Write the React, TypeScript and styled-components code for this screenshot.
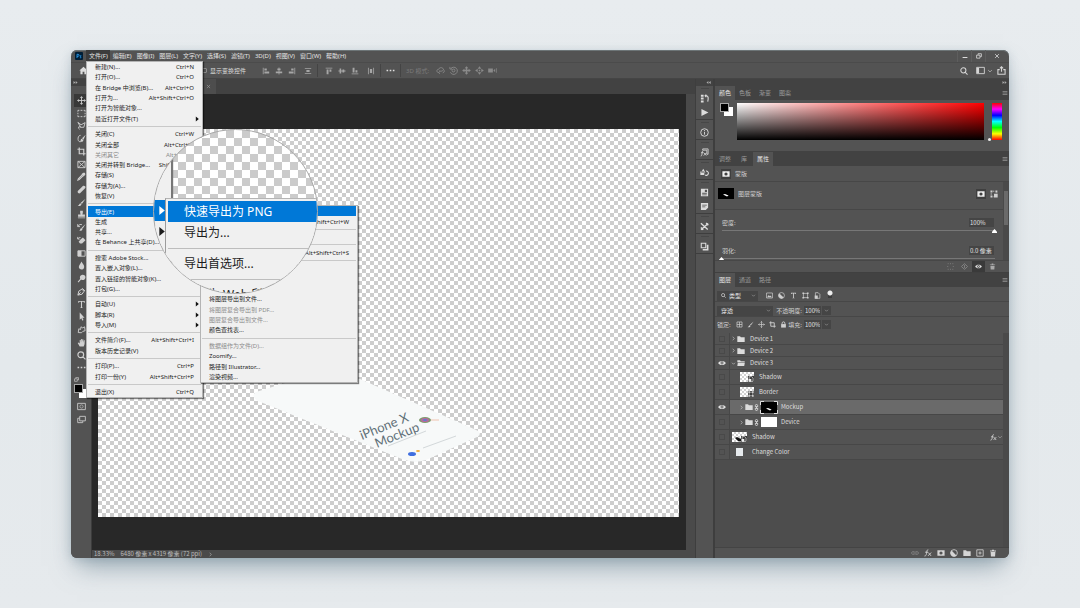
import React from "react";
import styled, { createGlobalStyle, css } from "styled-components";

const c = {
  bar: "#535353",
  dark: "#424242",
  field: "#454545",
  line: "#474747",
  canvas: "#282828",
  text: "#cfcfcf",
  dim: "#9a9a9a",
  menu: "#f0f0f0",
  blue: "#0078d7",
};

const Global = createGlobalStyle`
  * { box-sizing: border-box; }
  body { margin: 0; background: linear-gradient(180deg, #e8ecef 0%, #e4e9ec 60%, #e6eaed 100%); }
  button, input, select, label {
    font: inherit; color: inherit; margin: 0; padding: 0; border: 0; background: none; outline: none;
  }
  button, select { appearance: none; }
  svg { display: block; flex: none; }
`;

const Page = styled.main`
  min-height: 100vh;
  display: flex;
  padding: 50px 71px;
  font: 6px/8px "Noto Sans", "Noto Sans CJK SC", sans-serif;
  color: ${c.text};
`;

const Window = styled.div`
  position: relative;
  flex: 1;
  min-width: 0;
  display: flex;
  flex-direction: column;
  border-radius: 6px;
  background: ${c.bar};
  box-shadow: 0 14px 24px -6px rgba(96, 122, 136, 0.6), 0 2px 10px rgba(120, 145, 158, 0.3);
`;

/* ---------- icons ---------- */

type Shape = { d: string; fill?: boolean; w?: number };
const shapes: Record<string, Shape[]> = {
  move: [{ d: "M5 .8V9.2M.8 5H9.2M3.7 2 5 .7 6.3 2M3.7 8 5 9.3 6.3 8M2 3.7.7 5 2 6.3M8 3.7 9.3 5 8 6.3" }],
  marquee: [{ d: "M1 3V1.5H2.6M4 1.5H6M7.4 1.5H9V3M9 4.2V5.8M9 7V8.5H7.4M6 8.5H4M2.6 8.5H1V7M1 5.8V4.2" }],
  lasso: [{ d: "M1 1.5 4.5 4.2 9 1.8 7.6 7H4.2L1 1.5M4.2 7 2.2 6.2 1.6 8 3 9.2" }],
  quick: [{ d: "M4 1.5C1.5 1.5 1 4 1.2 6.2S3 8.8 4 8.6" }, { d: "M9.6.8 5.6 4.8 7.2 6.4ZM5.2 5.2C3.6 5.6 4.6 7.6 3.2 8.4 5.4 9.2 7.4 8.4 7 6.7Z", fill: true }],
  crop: [{ d: "M2.5.5V7.5H9.5M.5 2.5H7.5V9.5", w: 1.3 }],
  frame: [{ d: "M1 1.5H9V8.5H1ZM1 1.5 9 8.5M9 1.5 1 8.5" }],
  dropper: [{ d: "M6 3 1.5 7.5 1 9 2.5 8.5 7 4", w: 1.2 }, { d: "M5 2.4 7.6 5 8.2 4.2 9.4 2.6 8.6.8 7 .8 5.8 1.8Z", fill: true }],
  heal: [{ d: "M.9 6.6 6.2 1.3C7.2.3 8.4.8 9 1.5S9.6 3.2 8.7 4L3.4 9.2C2 10 0 8 .9 6.6Z", fill: true }],
  brush: [{ d: "M9.5.8 4.2 5.4 5.4 6.6ZM3.8 5.9C2.4 6.2 2.6 8 .8 8.8 3 9.4 5 8.6 4.9 7Z", fill: true }],
  stamp: [{ d: "M3.5.8H6.5V3L6 5H8.8V7.4H1.2V5H4L3.5 3ZM1 8.2H9V9.2H1Z", fill: true }],
  history: [{ d: "M9.5 1 5.2 5.2 6.2 6.3ZM4.8 5.6C3.6 6 4 7.4 2.6 8.6 5 9 6 8 6 6.6Z", fill: true }, { d: "M.8 1.2V4H3.4M1 3.8C2 1.6 4.4 1.2 5.6 2" }],
  eraser: [{ d: "M4.2 3.6 6.6 1.6 9.4 4.8 5.6 8.4H3.4L1.8 6.4Z", fill: true }, { d: "M.8 1V3.4H3M1 3.2C2 1.4 3.2 1.4 4 1.8" }],
  gradient: [{ d: "M1 2H9V8H1Z" }, { d: "M1 2H5V8H1Z", fill: true }],
  drop: [{ d: "M5 .6C6 3 8.2 4.6 8 6.6S6.4 9.4 5 9.4 2 8.4 2 6.6 4 3 5 .6Z", fill: true }],
  dodge: [{ d: "M6 .8A3 3 0 1 1 4.6 6.2L1.6 9.4.8 8.6 3.6 5.2A3 3 0 0 1 6 .8Z", fill: true }],
  pen: [{ d: "M1 9 2 4.6 5.4 2.4 7.8 4.8 5.6 8 1 9 4 6M5.8 1.4 8.8 4.4", w: 1.1 }],
  type: [{ d: "M1.4 1H8.6V3H7.8L7.4 2H5.6V8.2L6.6 8.6V9H3.4V8.6L4.4 8.2V2H2.6L2.2 3H1.4Z", fill: true }],
  arrow: [{ d: "M3 .6V8.6L4.8 7 6 9.6 7.2 9 6 6.4H8.4Z", fill: true }],
  blob: [{ d: "M1.4 8.4 2 4.2 4 5 4.4 2 6.4 3.2 8.4 2 9 6.4 6.6 7 5 8.6Z" }],
  hand: [{ d: "M3 9.4 .8 5.6 1.6 5 3 6V2.2H4V5L4.4 1H5.4V5L6 1.4H7L7 5.2 7.6 2.6H8.6L8.4 7 7.4 9.4Z", fill: true }],
  zoom: [{ d: "M4.2 1A3.2 3.2 0 1 1 4.2 7.4 3.2 3.2 0 0 1 4.2 1M6.6 6.6 9.4 9.4", w: 1.3 }],
  dots: [{ d: "M.6 4.2H2.4V5.8H.6ZM4.1 4.2H5.9V5.8H4.1ZM7.6 4.2H9.4V5.8H7.6Z", fill: true }],
  mask: [{ d: "M.5 1.5H9.5V8.5H.5ZM5 3A2 2 0 1 0 5 7 2 2 0 1 0 5 3Z", fill: true }],
  quickMask: [{ d: "M.7 1.5H9.3V8.5H.7Z" }, { d: "M5 3.2A1.8 1.8 0 1 1 5 6.8 1.8 1.8 0 0 1 5 3.2", w: 0.7 }],
  screen: [{ d: "M3 1.5H9.3V6.5H3ZM2.8 3.6H.8V8.5H6.4V6.8" }],
  home: [{ d: "M5 .8 9.6 5H8.4V9.2H6V6.4H4V9.2H1.6V5H.4Z", fill: true }],
  alignL: [{ d: "M1 .8H2V9.2H1ZM3 2H6V4.4H3ZM3 5.6H9V8H3Z", fill: true }],
  alignC: [{ d: "M4.5.6H5.5V2H7V4H5.5V5.6H9V7.8H5.5V9.4H4.5V7.8H1V5.6H4.5V4H3V2H4.5Z", fill: true }],
  alignR: [{ d: "M8 .8H9V9.2H8ZM4 2H7V4.4H4ZM1 5.6H7V8H1Z", fill: true }],
  distV: [{ d: "M1 1.2H9V2.2H1ZM3 3.6H7V6.4H3ZM1 7.8H9V8.8H1Z", fill: true }],
  alignT: [{ d: "M.8 1H9.2V2H.8ZM2 3H4.4V9H2ZM5.6 3H8V6H5.6Z", fill: true }],
  alignM: [{ d: "M.6 4.5H2V2H4V4.5H5.6V3H7.8V4.5H9.4V5.5H7.8V7H5.6V5.5H4V8H2V5.5H.6Z", fill: true }],
  alignB: [{ d: "M.8 8H9.2V9H.8ZM2 1H4.4V7H2ZM5.6 4H8V7H5.6Z", fill: true }],
  distH: [{ d: "M1.2 1H2.2V9H1.2ZM3.6 2.6H6.4V7.4H3.6ZM7.8 1H8.8V9H7.8Z", fill: true }],
  orbit: [{ d: "M7.5 7.6C9.6 7 9.8 4.8 8.4 4.2 8 1.4 4 1 3 3.6.4 3.6.2 7.2 3 7.4M4 6 3 7.4 4.4 8.6M3.6 5.4C5 6.2 7 5.8 8.2 4.4" }],
  roll: [{ d: "M2 3A4 4 0 1 1 1.6 7M1 1V3.4H3.4M5 3.4A1.6 1.6 0 1 1 5 6.6 1.6 1.6 0 0 1 5 3.4" }],
  pan: [{ d: "M5 .2 7 2.6H5.8V4.2H7.4V3L9.8 5 7.4 7V5.8H5.8V7.4H7L5 9.8 3 7.4H4.2V5.8H2.6V7L.2 5 2.6 3V4.2H4.2V2.6H3Z", fill: true }],
  slide: [{ d: "M5 .2 7 3H3ZM5 9.8 7 7H3ZM.2 5 3 3V7ZM9.8 5 7 3V7ZM4.2 4.2H5.8V5.8H4.2Z", fill: true }],
  camera: [{ d: "M.2 2.8H5.4V7.2H.2ZM6 5 8 3V7ZM9 2.6H9.7V7.4H9Z", fill: true }],
  layout: [{ d: "M.7 1.5H9.3V8.5H.7Z" }, { d: "M1 2H3.4V8H1Z", fill: true }],
  share: [{ d: "M3 4H1V9.2H9V4H7M5 6.4V1M3.2 2.6 5 .8 6.8 2.6", w: 1.2 }],
  down: [{ d: "M2 3.5 5 6.5 8 3.5", w: 1.1 }],
  right: [{ d: "M3.5 1.5 6.5 5 3.5 8.5", w: 1.1 }],
  min: [{ d: "M1 6.5H9V8.3H1Z", fill: true }],
  restore: [{ d: "M3.4 3V1.2H9V6H7M1 3.6H6.6V8.6H1Z", w: 1.3 }],
  close: [{ d: "M1.8 1.8 8.2 8.2M8.2 1.8 1.8 8.2", w: 1.3 }],
  collapse: [{ d: "M4.8 2V8L1 5ZM9.4 2V8L5.6 5Z", fill: true }],
  expand: [{ d: "M1 2V8L4.8 5ZM5.4 2V8L9.2 5Z", fill: true }],
  lines: [{ d: "M1 2.5H9M1 5H9M1 7.5H9" }],
  historyP: [{ d: "M1 .8H4V3H1ZM1 4H4V6.2H1ZM1 7.2H4V9.4H1Z", fill: true }, { d: "M5.6 2H7.4C9.4 2.2 9.4 5 8.6 8.6M7 .6 5.6 2 7 3.4", w: 1.2 }],
  play: [{ d: "M1.6 1 9.4 5 1.6 9Z", fill: true }],
  info: [{ d: "M5 .8A4.2 4.2 0 1 1 5 9.2 4.2 4.2 0 0 1 5 .8M5 4.4V7.4M5 2.4V3.5" }],
  fxP: [{ d: "M3 1H9V7H7.6V2.4H3ZM3.6 3C2.4 3 2.4 5 2.2 6.8S1.4 9 .8 9M1.2 5.2H4M4.4 5.4 7 8.4M7 5.4 4.2 8.4", w: 0.9 }],
  shapesP: [{ d: "M3.6 .8 6 5H1.2ZM.4 4H4.8V7.8H.4Z", fill: true }, { d: "M6.6 3.4A2.4 2.4 0 1 1 5.6 7.8", w: 1.2 }],
  doc1: [{ d: "M1 .8H9V9.2H1ZM2.4 5.4V6.4H7.6V5.4ZM2.4 7.2V8H7.6V7.2ZM5.4 2V4.4H7.8V2Z", fill: true }],
  doc2: [{ d: "M1 1H9V6.4L6.4 9H1ZM2.4 3V3.8H7.6V3ZM2.4 5V5.8H6V5Z", fill: true }],
  tools: [{ d: "M1 1.4 8.6 8.4M9 1.6 1.2 8.6M6.8 1.2 9.2 3.6M1 6 3.6 8.6", w: 1.5 }],
  stack: [{ d: "M.8.8H7V7H.8ZM2 2V5.8H5.8V2ZM7.6 3H9.4V9.4H3V7.8H7.6Z", fill: true }],
  maskLink: [{ d: "M3.4 1.5H5.4M8.5 4V3.4M1.5 4V6M3.4 8.5H4.4" }, { d: "M.6.6H3V3H.6ZM6.8.6H9.2V3H6.8ZM.6 7H3V9.4H.6ZM5 4.8H9.6V9.4H5Z", fill: true }],
  dotsq: [{ d: "M1 1H2.4M4.3 1H5.7M7.6 1H9M1 9H2.4M4.3 9H5.7M7.6 9H9M1 4.3V5.7M9 4.3V5.7" }],
  diamond: [{ d: "M5 1 9.4 5 5 9 .6 5ZM5 3V7", w: 1.2 }],
  eye: [{ d: "M.2 5C2 1.6 8 1.6 9.8 5 8 8.4 2 8.4 .2 5ZM5 3.2A1.8 1.8 0 1 0 5 6.8 1.8 1.8 0 1 0 5 3.2ZM5 4.2A.8.8 0 1 1 5 5.8.8.8 0 0 1 5 4.2Z", fill: true }],
  trash: [{ d: "M1.2 2H3.8V.8H6.2V2H8.8V3H1.2ZM2 3.8H8L7.6 9.4H2.4Z", fill: true }],
  image: [{ d: "M.8 1.4H9.2V8.6H.8Z" }, { d: "M1.6 7.4 4 4.4 5.4 6 6.4 5 8.4 7.4Z", fill: true }],
  adjust: [{ d: "M5 .8A4.2 4.2 0 1 1 5 9.2 4.2 4.2 0 0 1 5 .8" }, { d: "M2 2A4.2 4.2 0 0 0 8 8Z", fill: true }],
  shapeF: [{ d: "M2 2H8V8H2Z" }, { d: "M.6.6H3V3H.6ZM7 .6H9.4V3H7ZM.6 7H3V9.4H.6ZM7 7H9.4V9.4H7Z", fill: true }],
  smart: [{ d: "M2 9V1H6L8.4 3.4V9Z" }, { d: "M1 5H5.4V9.6H1Z", fill: true }],
  grid: [{ d: "M1.4 1.4H8.6V8.6H1.4ZM1.4 5H8.6M5 1.4V8.6" }],
  lock: [{ d: "M1.6 4.4H8.4V9.4H1.6Z", fill: true }, { d: "M3 4.6V3C3 .6 7 .6 7 3V4.6", w: 1.3 }],
  folder: [{ d: "M.4 1.6H3.8L4.8 2.8H9.6V8.8H.4Z", fill: true }],
  folderOpen: [{ d: "M.4 1.6H3.8L4.8 2.8H9.6V4H.4ZM1 4.8H9.8L9 8.8H.4Z", fill: true }],
  link: [{ d: "M3.4 4.4V2C3.4.2 6.6.2 6.6 2V4.4M3.4 5.6V8C3.4 9.8 6.6 9.8 6.6 8V5.6M5 3V7", w: 1.3 }],
  linkH: [{ d: "M4.4 3.4H2C.4 3.4.4 6.6 2 6.6H4.4M5.6 3.4H8C9.6 3.4 9.6 6.6 8 6.6H5.6M3 5H7" }],
  fx: [{ d: "M5.4 1C3.6.6 3.6 3 3.2 5.4S2 9 .6 8.8M1.4 4H5M5.4 4.4 8.8 8.6M9 4.4 5 8.6", w: 1.1 }],
  plus: [{ d: "M1 1H9V9H1ZM5 3V7M3 5H7" }],
  tri: [{ d: "M3 1 8 5 3 9Z", fill: true }],
};

function Icon({ name, size = 8, color }: { name: string; size?: number; color?: string }) {
  return (
    <svg width={size} height={size} viewBox="0 0 10 10" color={color} aria-hidden="true">
      {shapes[name].map((s, i) => (
        <path
          key={i}
          d={s.d}
          fill={s.fill ? "currentColor" : "none"}
          fillRule="evenodd"
          stroke={s.fill ? "none" : "currentColor"}
          strokeWidth={s.w ?? 1}
        />
      ))}
    </svg>
  );
}

/* ---------- top bars ---------- */

const MenuBar = styled.nav`
  height: 12px;
  display: flex;
  align-items: stretch;
  border-radius: 6px 6px 0 0;
  box-shadow: inset 0 1px 0 #6d7577;
  overflow: hidden;
`;
const Logo = styled.div`
  width: 15px;
  display: flex;
  align-items: center;
  justify-content: center;
`;
const MenuButton = styled.button<{ $open?: boolean }>`
  padding: 0 2px 0 3px;
  white-space: nowrap;
  color: #e4e4e4;
  ${(p) => p.$open && css`background: #3c3c3c;`}
`;
const WindowButtons = styled.div`
  margin-left: auto;
  padding-right: 2px;
  display: flex;
`;
const WindowButton = styled.button<{ $wide?: boolean }>`
  width: ${(p) => (p.$wide ? 22 : 14)}px;
  display: flex;
  align-items: center;
  justify-content: center;
  border-left: 1px solid #5e5e5e;
  color: #ddd;
`;

const OptionsBar = styled.div`
  height: 17px;
  display: flex;
  align-items: center;
  border-top: 1px solid #4b4b4b;
  border-bottom: 1px solid #454545;
  padding-left: 8px;
  color: #a6a6a6;
`;
const OptionCheck = styled.label`
  display: flex;
  align-items: center;
  gap: 3px;
  margin-left: 114px;
  color: #dedede;
  white-space: nowrap;
`;
const Check = styled.input`
  appearance: none;
  width: 5px;
  height: 5px;
  border: 1px solid #8b8b8b;
  border-radius: 1px;
`;
const ToolGroup = styled.div<{ $left: number; $gap: number }>`
  display: flex;
  align-items: center;
  margin-left: ${(p) => p.$left}px;
  gap: ${(p) => p.$gap}px;
`;
const Divider = styled.span`
  width: 1px;
  height: 13px;
  margin: 0 5px;
  background: #444;
`;
const Mode = styled.span`
  color: #7c7c7c;
  white-space: nowrap;
`;
const IconButton = styled.button<{ $on?: boolean; $dim?: boolean }>`
  display: flex;
  align-items: center;
  justify-content: center;
  ${(p) => p.$on && css`background: #3a3a3a;`}
  ${(p) => p.$dim && css`color: #8a8a8a;`}
`;
const RightTools = styled.div`
  display: flex;
  align-items: center;
  gap: 4px;
  margin-left: auto;
  padding-right: 3px;
  color: #d5d5d5;
`;

/* ---------- work area ---------- */

const Work = styled.div`
  flex: 1;
  display: flex;
  min-height: 0;
`;
const Toolbar = styled.aside`
  width: 20px;
  display: flex;
  flex-direction: column;
  align-items: center;
  border-radius: 0 0 0 6px;
  background: ${c.bar};
  overflow: hidden;
`;
const Strip = styled.div<{ $end?: boolean }>`
  height: 7px;
  width: 100%;
  flex: none;
  display: flex;
  align-items: center;
  justify-content: ${(p) => (p.$end ? "flex-end" : "flex-start")};
  padding: 0 2px;
  background: ${c.dark};
  color: #aaa;
`;
const ToolList = styled.div`
  height: 280px;
  width: 20px;
  margin-top: 8px;
  display: flex;
  flex-direction: column;
`;
const Tool = styled.button<{ $on?: boolean }>`
  flex: 1;
  margin: 0 3px;
  display: flex;
  align-items: center;
  justify-content: center;
  color: #d0d0d0;
  ${(p) => p.$on && css`background: #383838;`}
`;
const Colors = styled.div<{ $size: number }>`
  display: grid;
  grid-template-columns: 1fr 1fr 1fr;
  grid-template-rows: 1fr 1fr 1fr;
  width: ${(p) => p.$size}px;
  height: ${(p) => p.$size}px;
  flex: none;
`;
const Back = styled.span`
  grid-area: 2 / 2 / 4 / 4;
  background: #fff;
`;
const Fore = styled.span`
  grid-area: 1 / 1 / 3 / 3;
  z-index: 1;
  background: #000;
  border: 1px solid #a8a8a8;
`;
const ToolFoot = styled.div`
  display: flex;
  flex-direction: column;
  align-items: center;
  gap: 4px;
  margin-top: 3px;
  color: #c8c8c8;
`;
const MiniSwatch = styled.span`
  width: 15px;
  height: 5px;
  margin-bottom: -2px;
  display: flex;
  color: #ccc;
`;

const Doc = styled.section`
  flex: 1;
  min-width: 0;
  display: flex;
  flex-direction: column;
  border-left: 1px solid #3c3c3c;
`;
const Tabs = styled.div`
  height: 15px;
  display: flex;
  background: ${c.dark};
`;
const DocTab = styled.div`
  width: 124px;
  display: flex;
  align-items: center;
  justify-content: flex-end;
  padding-right: 5px;
  background: #4d4d4d;
  color: #999;
`;
const CanvasRow = styled.div`
  flex: 1;
  display: flex;
  background: #4a4a4a;
`;
const CanvasArea = styled.div`
  flex: 1;
  display: flex;
  padding: 35px 7px 33px 6px;
  margin-right: 9px;
  background: ${c.canvas};
`;
const Stage = styled.div`
  flex: 1;
  min-width: 0;
  overflow: hidden;
  background: repeating-conic-gradient(#cdcdcd 0 25%, #fff 0 50%) 0 0 / 8px 8px;
`;
const Status = styled.div`
  height: 8px;
  display: flex;
  align-items: center;
  gap: 6px;
  padding-left: 2px;
  background: #4a4a4a;
  color: #bdbdbd;
  font-family: "Noto Sans CJK SC", sans-serif;
  white-space: nowrap;
`;

/* ---------- dock and panels ---------- */

const Dock = styled.aside`
  width: 20px;
  background: ${c.bar};
  border: 0 solid #3e3e3e;
  border-left-width: 1px;
  border-right-width: 2px;
`;
const DockGroup = styled.div`
  padding-top: 5px;
  border-bottom: 1px solid #3e3e3e;
  background: linear-gradient(#474747, #474747) center 2px / 8px 1px no-repeat;
`;
const DockButton = styled.button`
  width: 100%;
  height: 14px;
  display: flex;
  align-items: center;
  justify-content: center;
  color: #dcdcdc;
`;
const Panels = styled.aside`
  width: 294px;
  display: flex;
  flex-direction: column;
  background: ${c.bar};
  border-radius: 0 0 6px 0;
  font-family: "Noto Sans CJK SC", sans-serif;
  overflow: hidden;
`;
const PanelTabs = styled.div`
  height: 14px;
  flex: none;
  display: flex;
  align-items: stretch;
  background: ${c.dark};
  padding-right: 1px;
`;
const PanelTab = styled.button<{ $on?: boolean }>`
  min-width: 18px;
  padding: 0 4px;
  color: ${(p) => (p.$on ? "#e6e6e6" : c.dim)};
  background: ${(p) => (p.$on ? c.bar : "transparent")};
`;
const TabsEnd = styled.button`
  margin-left: auto;
  color: #aaa;
`;
const ColorBody = styled.div`
  height: 52px;
  display: flex;
  padding: 3px 7px 0 5px;
  gap: 4px;
  border-bottom: 1px solid ${c.dark};
`;
const Spectrum = styled.div`
  flex: 1;
  height: 37px;
  background: linear-gradient(to bottom, transparent, #000), linear-gradient(to right, #fff, #f00);
`;
const Hue = styled.div`
  position: relative;
  width: 10px;
  height: 37px;
  margin-left: 4px;
  background: linear-gradient(#f00, #f0f, #00f, #0ff, #0f0, #ff0, #f00);
`;
const HueDot = styled.span`
  position: absolute;
  bottom: -1px;
  left: -4px;
  width: 3px;
  height: 3px;
  border-radius: 50%;
  background: #eee;
`;
const PropHead = styled.div`
  height: 16px;
  display: flex;
  align-items: center;
  gap: 4px;
  padding-left: 6px;
  border-bottom: 1px solid ${c.line};
`;
const Badge = styled.span`
  width: 10px;
  height: 10px;
  display: flex;
  align-items: center;
  justify-content: center;
  background: #3f3f3f;
  color: #eee;
`;
const PropBody = styled.div`
  height: 78px;
  display: flex;
  overflow: hidden;
`;
const PropMain = styled.div`
  flex: 1;
`;
const MaskRow = styled.div`
  height: 28px;
  display: flex;
  align-items: center;
  gap: 4px;
  padding: 0 5px 4px 3px;
  border-bottom: 1px solid ${c.line};
`;
const Push = styled.span`
  flex: 1;
`;
const Fields = styled.div`
  padding-top: 8px;
`;
const Field = styled.div`
  height: 28px;
  padding: 0 6px 0 4px;
`;
const FieldHead = styled.div`
  height: 9px;
  display: flex;
  align-items: center;
  justify-content: space-between;
  padding: 0 3px;
`;
const ValueBox = styled.input<{ $w: number }>`
  width: ${(p) => p.$w}px;
  height: 9px;
  padding: 0 1px;
  background: ${c.field};
  color: #e2e2e2;
`;
const Range = styled.input`
  appearance: none;
  display: block;
  width: 100%;
  height: 7px;
  background: linear-gradient(#777, #777) center 3px / calc(100% - 5px) 1px no-repeat;
  &::-webkit-slider-runnable-track {
    height: 7px;
  }
  &::-webkit-slider-thumb {
    appearance: none;
    width: 5px;
    height: 4px;
    margin-top: 2px;
    background: #fff;
    clip-path: polygon(50% 0, 100% 70%, 100% 100%, 0 100%, 0 70%);
  }
`;
const Scroll = styled.div`
  width: 6px;
  padding-top: 9px;
  background: #4a4a4a;
`;
const ScrollThumb = styled.div`
  height: 34px;
  margin: 0 1px;
  background: #6a6a6a;
`;
const PropFoot = styled.div`
  height: 13px;
  display: flex;
  align-items: center;
  justify-content: flex-end;
  gap: 1px;
  padding-right: 10px;
  border-top: 1px solid ${c.line};
  border-bottom: 1px solid #404040;
  & > button {
    width: 13px;
    height: 11px;
  }
`;
const LayerBar = styled.div<{ $line?: boolean }>`
  height: 15px;
  display: flex;
  align-items: center;
  padding: 0 2px;
  white-space: nowrap;
  ${(p) => p.$line && css`padding-top: 3px; border-bottom: 1px solid ${c.line};`}
`;
const SelectBox = styled.div<{ $w: number }>`
  width: ${(p) => p.$w}px;
  height: 10px;
  display: flex;
  align-items: center;
  gap: 3px;
  padding: 0 2px 0 4px;
  background: ${c.field};
  color: #e2e2e2;
  & > select {
    flex: 1;
    min-width: 0;
  }
`;
const IconRow = styled.div<{ $gap: number; $left: number }>`
  display: flex;
  align-items: center;
  gap: ${(p) => p.$gap}px;
  margin-left: ${(p) => p.$left}px;
`;
const Toggle = styled.input`
  appearance: none;
  width: 6px;
  height: 8px;
  margin: 0 0 3px 6px;
  background: radial-gradient(circle at 3px 3px, #eee 2px, transparent 3px),
    linear-gradient(#3c3c3c, #3c3c3c) center bottom / 4px 5px no-repeat;
`;
const Amount = styled.div`
  display: flex;
  align-items: center;
  gap: 1px;
  margin-left: auto;
  margin-right: 176px;
`;
const AmountLabel = styled.label`
  margin-right: 1px;
`;
const Drop = styled.button`
  width: 9px;
  height: 9px;
  display: flex;
  align-items: center;
  justify-content: center;
  background: ${c.field};
  color: #aaa;
`;
const LayersArea = styled.div`
  flex: 1;
  display: flex;
  margin-top: 1px;
  background: #4d4d4d;
`;
const LayerList = styled.ul`
  flex: 1;
  margin: 0;
  padding: 0;
  list-style: none;
`;
const LayerRow = styled.li<{ $h: number }>`
  height: ${(p) => p.$h}px;
  display: flex;
  background: ${c.bar};
  border-bottom: 1px solid ${c.line};
`;
const EyeCell = styled.button`
  width: 15px;
  display: flex;
  align-items: center;
  justify-content: center;
  border-right: 1px solid ${c.line};
  color: #e2e2e2;
`;
const EyeBox = styled.span`
  width: 6px;
  height: 6px;
  border: 1px solid #494949;
`;
const LayerBody = styled.div<{ $indent: number; $on?: boolean }>`
  flex: 1;
  display: flex;
  align-items: center;
  padding-left: ${(p) => p.$indent}px;
  color: #dcdcdc;
  background: ${(p) => (p.$on ? "#6a6a6a" : "transparent")};
`;
const Name = styled.span<{ $left: number }>`
  margin-left: ${(p) => p.$left}px;
  flex: 1;
`;
const Thumb = styled.span<{ $w: number }>`
  width: ${(p) => p.$w}px;
  height: 10px;
  display: flex;
  align-items: flex-end;
  justify-content: flex-end;
  background: repeating-conic-gradient(#d2d2d2 0 25%, #fff 0 50%) 0 0 / 4px 4px;
`;
const ThumbBadge = styled.span`
  display: flex;
  background: #3d3d3d;
  color: #eee;
`;
const Fill = styled.span<{ $w: number; $h: number; $color: string }>`
  width: ${(p) => p.$w}px;
  height: ${(p) => p.$h}px;
  background: ${(p) => p.$color};
`;
const LayersFoot = styled.div`
  height: 11px;
  display: flex;
  align-items: center;
  justify-content: flex-end;
  gap: 5px;
  padding-right: 12px;
  border-top: 1px solid #444;
  color: #d5d5d5;
`;

/* ---------- menus ---------- */

const Menu = styled.div<{ $x: number; $y: number; $w: number; $h: number }>`
  position: absolute;
  left: ${(p) => p.$x}px;
  top: ${(p) => p.$y}px;
  width: ${(p) => p.$w}px;
  height: ${(p) => p.$h}px;
  display: flex;
  flex-direction: column;
  padding: 0 1px;
  border: 1px solid #b4b4b4;
  background: ${c.menu};
  box-shadow: 1px 1px 1px rgba(0, 0, 0, 0.5);
  color: #1c1c1c;
`;
const Item = styled.button<{ $on?: boolean; $off?: boolean }>`
  flex: 2;
  min-height: 0;
  display: flex;
  align-items: center;
  padding: 0 7px;
  white-space: nowrap;
  text-align: left;
  ${(p) => p.$off && css`color: #8c8c8c;`}
  ${(p) => p.$on && css`background: ${c.blue}; color: #fff;`}
`;
const Shortcut = styled.span`
  margin-left: auto;
`;
const Arrow = styled.span`
  margin-left: auto;
  margin-right: -6px;
`;
const Separator = styled.hr`
  flex: 1;
  min-height: 0;
  margin: 0;
  border: 0;
  background: linear-gradient(#c9c9c9, #c9c9c9) center / 100% 1px no-repeat;
`;

/* ---------- magnifier ---------- */

const Lens = styled.div`
  position: absolute;
  left: 82px;
  top: 79px;
  width: 165px;
  height: 165px;
  border: 1px solid #a9a9a9;
  border-radius: 50%;
  overflow: hidden;
  background: repeating-conic-gradient(#cbcbcb 0 25%, #fff 0 50%) 0 0 / 16px 16px;
  color: #1c1c1c;
  font-size: 12px;
  line-height: 16px;
`;
const LensMenu = styled.div`
  position: absolute;
  inset: 0 auto 0 0;
  width: 17px;
  padding-top: 65px;
  background: ${c.menu};
  box-shadow: 1px 0 1px 1px #777;
`;
const LensParent = styled.div<{ $on?: boolean }>`
  height: 21px;
  display: flex;
  align-items: center;
  padding-left: 2px;
  ${(p) => p.$on && css`background: ${c.blue}; color: #fff; margin-top: 5px;`}
`;
const LensSubmenu = styled.div`
  position: absolute;
  inset: 68px 0 0 11px;
  padding: 2px 0 0 2px;
  border-top: 1px solid #b4b4b4;
  border-left: 1px solid #9c9c9c;
  background: ${c.menu};
  overflow: hidden;
`;
const LensItem = styled.button<{ $on?: boolean }>`
  width: 100%;
  height: 21px;
  display: flex;
  align-items: center;
  padding-left: 16px;
  white-space: nowrap;
  ${(p) => p.$on && css`background: ${c.blue}; color: #fff;`}
`;
const LensLine = styled.hr`
  height: 10px;
  margin: 0;
  border: 0;
  background: linear-gradient(#bdbdbd, #bdbdbd) center / 100% 1px no-repeat;
`;

/* ---------- data ---------- */

type Entry = { label?: string; key?: string; on?: boolean; off?: boolean; sub?: boolean } | null;

const fileMenu: Entry[] = [
  { label: "新建(N)...", key: "Ctrl+N" },
  { label: "打开(O)...", key: "Ctrl+O" },
  { label: "在 Bridge 中浏览(B)...", key: "Alt+Ctrl+O" },
  { label: "打开为...", key: "Alt+Shift+Ctrl+O" },
  { label: "打开为智能对象..." },
  { label: "最近打开文件(T)", sub: true },
  null,
  { label: "关闭(C)", key: "Ctrl+W" },
  { label: "关闭全部", key: "Alt+Ctrl+W" },
  { label: "关闭其它", key: "Alt+Ctrl+P", off: true },
  { label: "关闭并转到 Bridge...", key: "Shift+Ctrl+W" },
  { label: "存储(S)" },
  { label: "存储为(A)..." },
  { label: "恢复(V)" },
  null,
  { label: "导出(E)", on: true },
  { label: "生成" },
  { label: "共享..." },
  { label: "在 Behance 上共享(D)..." },
  null,
  { label: "搜索 Adobe Stock..." },
  { label: "置入嵌入对象(L)..." },
  { label: "置入链接的智能对象(K)..." },
  { label: "打包(G)..." },
  null,
  { label: "自动(U)", sub: true },
  { label: "脚本(R)", sub: true },
  { label: "导入(M)", sub: true },
  null,
  { label: "文件简介(F)...", key: "Alt+Shift+Ctrl+I" },
  { label: "版本历史记录(V)" },
  null,
  { label: "打印(P)...", key: "Ctrl+P" },
  { label: "打印一份(Y)", key: "Alt+Shift+Ctrl+P" },
  null,
  { label: "退出(X)", key: "Ctrl+Q" },
];

const exportMenu: Entry[] = [
  { on: true },
  { key: "Alt+Shift+Ctrl+W" },
  null,
  {},
  null,
  { key: "Alt+Shift+Ctrl+S" },
  null,
  {},
  {},
  {},
  { label: "将图层导出到文件..." },
  { label: "将图层复合导出到 PDF...", off: true },
  { label: "图层复合导出到文件...", off: true },
  { label: "颜色查找表..." },
  null,
  { label: "数据组作为文件(D)...", off: true },
  { label: "Zoomify..." },
  { label: "路径到 Illustrator..." },
  { label: "渲染视频..." },
];

const topMenus = ["文件(F)", "编辑(E)", "图像(I)", "图层(L)", "文字(Y)", "选择(S)", "滤镜(T)", "3D(D)", "视图(V)", "窗口(W)", "帮助(H)"];
const tools = ["move", "marquee", "lasso", "quick", "crop", "frame", "dropper", "heal", "brush", "stamp", "history", "eraser", "gradient", "drop", "dodge", "pen", "type", "arrow", "blob", "hand", "zoom", "dots"];
const dock = [["historyP", "play"], ["info"], ["fxP"], ["shapesP"], ["doc1", "doc2"], ["tools"], ["stack"]];

function MenuEntries({ entries }: { entries: Entry[] }) {
  return (
    <>
      {entries.map((e, i) =>
        e ? (
          <Item key={i} role="menuitem" $on={e.on} $off={e.off}>
            {e.label}
            {e.key && <Shortcut>{e.key}</Shortcut>}
            {e.sub && (
              <Arrow>
                <Icon name="tri" size={6} color="#111" />
              </Arrow>
            )}
          </Item>
        ) : (
          <Separator key={i} />
        )
      )}
    </>
  );
}

function MaskThumb({ frame }: { frame?: boolean }) {
  return frame ? (
    <svg width="18" height="13" viewBox="0 0 18 13" aria-hidden="true">
      <rect x="1" y="1" width="16" height="11" fill="#000" />
      <path d="M6 7.6 8 7 11.6 8.6 10 9.6Z" fill="#fff" />
      <path d="M.5 4V.5H4M14 .5H17.5V4M17.5 9V12.5H14M4 12.5H.5V9" fill="none" stroke="#ddd" />
    </svg>
  ) : (
    <svg width="16" height="11" viewBox="0 0 16 11" aria-hidden="true">
      <rect width="16" height="11" fill="#000" />
      <path d="M5 6.6 7 6 10.6 7.6 9 8.6Z" fill="#fff" />
    </svg>
  );
}

function Artwork() {
  return (
    <svg width="400" height="340" viewBox="0 0 400 340" aria-hidden="true">
      <path d="M158 263Q152 267 160 272L304 330Q316 335 328 331L379 308Q386 304 376 300L262 250 200 250Z" fill="#f7f9f9" />
      <g fill="#5f7078" fontFamily="Lato, sans-serif" fontSize="13">
        <text transform="translate(264 311) rotate(-22)">iPhone X</text>
        <text transform="translate(279 319) rotate(-22)">Mockup</text>
      </g>
      <ellipse cx="327" cy="291" rx="6" ry="3" fill="#7d9a6c" />
      <ellipse cx="327" cy="291" rx="4" ry="2" fill="#b86a9c" />
      <ellipse cx="327" cy="291" rx="2" ry="1" fill="#5b7fd0" />
      <path d="M333 291H341" stroke="#efc3b0" strokeWidth="1" />
      <path d="M290 317 328 302M325 319 358 307" stroke="#d3d8da" strokeWidth="1" />
      <ellipse cx="314" cy="325" rx="4" ry="2" fill="#3f6fe0" />
      <ellipse cx="320" cy="322" rx="2" ry="1" fill="#f0ac3c" />
    </svg>
  );
}

function ColorPanel() {
  return (
    <>
      <PanelTabs>
        <PanelTab $on>颜色</PanelTab>
        <PanelTab>色板</PanelTab>
        <PanelTab>渐变</PanelTab>
        <PanelTab>图案</PanelTab>
        <TabsEnd aria-label="颜色面板菜单"><Icon name="lines" size={6} /></TabsEnd>
      </PanelTabs>
      <ColorBody>
        <Colors $size={13}>
          <Back />
          <Fore />
        </Colors>
        <Spectrum />
        <Hue><HueDot /></Hue>
      </ColorBody>
    </>
  );
}

function PropertiesPanel() {
  return (
    <>
      <PanelTabs>
        <PanelTab>调整</PanelTab>
        <PanelTab>库</PanelTab>
        <PanelTab $on>属性</PanelTab>
        <TabsEnd aria-label="属性面板菜单"><Icon name="lines" size={6} /></TabsEnd>
      </PanelTabs>
      <PropHead>
        <Badge><Icon name="mask" size={8} /></Badge>
        蒙版
      </PropHead>
      <PropBody>
        <PropMain>
          <MaskRow>
            <MaskThumb />
            图层蒙版
            <Push />
            <Badge><Icon name="mask" size={8} /></Badge>
            <Icon name="maskLink" size={8} />
          </MaskRow>
          <Fields>
            <Field>
              <FieldHead>
                <label htmlFor="density">密度:</label>
                <ValueBox $w={25} aria-label="密度值" defaultValue="100%" />
              </FieldHead>
              <Range id="density" type="range" defaultValue={100} />
            </Field>
            <Field>
              <FieldHead>
                <label htmlFor="feather">羽化:</label>
                <ValueBox $w={25} aria-label="羽化值" defaultValue="0.0 像素" />
              </FieldHead>
              <Range id="feather" type="range" defaultValue={0} />
            </Field>
          </Fields>
        </PropMain>
        <Scroll><ScrollThumb /></Scroll>
      </PropBody>
      <PropFoot>
        <IconButton $dim aria-label="载入选区"><Icon name="dotsq" size={7} /></IconButton>
        <IconButton $dim aria-label="应用蒙版"><Icon name="diamond" size={7} /></IconButton>
        <IconButton $on aria-label="停用蒙版"><Icon name="eye" size={7} color="#ddd" /></IconButton>
        <IconButton aria-label="删除蒙版"><Icon name="trash" size={7} color="#aaa" /></IconButton>
      </PropFoot>
    </>
  );
}

function Eye({ on }: { on?: boolean }) {
  return <EyeCell aria-label="可见性">{on ? <Icon name="eye" size={8} /> : <EyeBox />}</EyeCell>;
}

function LayersPanel() {
  return (
    <>
      <PanelTabs>
        <PanelTab $on>图层</PanelTab>
        <PanelTab>通道</PanelTab>
        <PanelTab>路径</PanelTab>
        <TabsEnd aria-label="图层面板菜单"><Icon name="lines" size={6} /></TabsEnd>
      </PanelTabs>
      <LayerBar $line>
        <SelectBox $w={41}>
          <Icon name="zoom" size={5} />
          <select aria-label="滤镜类型"><option>类型</option></select>
          <Icon name="down" size={5} color="#aaa" />
        </SelectBox>
        <IconRow $gap={5} $left={8}>
          {["image", "adjust", "type", "shapeF", "smart"].map((n) => <Icon key={n} name={n} size={7} />)}
        </IconRow>
        <Toggle type="checkbox" aria-label="图层过滤" />
      </LayerBar>
      <LayerBar $line>
        <SelectBox $w={56}>
          <select aria-label="混合模式"><option>穿透</option></select>
          <Icon name="down" size={5} color="#aaa" />
        </SelectBox>
        <Amount>
          <AmountLabel htmlFor="opacity">不透明度:</AmountLabel>
          <ValueBox id="opacity" $w={17} defaultValue="100%" />
          <Drop aria-label="不透明度选项"><Icon name="down" size={5} /></Drop>
        </Amount>
      </LayerBar>
      <LayerBar>
        锁定:
        <IconRow $gap={4} $left={5}>
          {["grid", "brush", "move", "crop", "lock"].map((n) => <Icon key={n} name={n} size={7} />)}
        </IconRow>
        <Amount>
          <AmountLabel htmlFor="fill">填充:</AmountLabel>
          <ValueBox id="fill" $w={17} defaultValue="100%" />
          <Drop aria-label="填充选项"><Icon name="down" size={5} /></Drop>
        </Amount>
      </LayerBar>
      <LayersArea>
        <LayerList>
          {["Device 1", "Device 2"].map((n) => (
            <LayerRow key={n} $h={12}>
              <Eye />
              <LayerBody $indent={1}>
                <Icon name="right" size={5} />
                <IconRow $gap={0} $left={1}><Icon name="folder" size={8} /></IconRow>
                <Name $left={5}>{n}</Name>
              </LayerBody>
            </LayerRow>
          ))}
          <LayerRow $h={13}>
            <Eye on />
            <LayerBody $indent={1}>
              <Icon name="down" size={5} />
              <IconRow $gap={0} $left={1}><Icon name="folderOpen" size={8} /></IconRow>
              <Name $left={5}>Device 3</Name>
            </LayerBody>
          </LayerRow>
          {["Shadow", "Border"].map((n) => (
            <LayerRow key={n} $h={15}>
              <Eye />
              <LayerBody $indent={10}>
                <Thumb $w={14}>
                  <ThumbBadge><Icon name={n === "Border" ? "shapeF" : "smart"} size={6} /></ThumbBadge>
                </Thumb>
                <Name $left={5}>{n}</Name>
              </LayerBody>
            </LayerRow>
          ))}
          <LayerRow $h={15}>
            <Eye on />
            <LayerBody $indent={9} $on>
              <Icon name="right" size={5} />
              <IconRow $gap={0} $left={1}>
                <Icon name="folder" size={8} />
                <Icon name="link" size={7} />
                <MaskThumb frame />
              </IconRow>
              <Name $left={3}>Mockup</Name>
            </LayerBody>
          </LayerRow>
          <LayerRow $h={15}>
            <Eye />
            <LayerBody $indent={9}>
              <Icon name="right" size={5} />
              <IconRow $gap={0} $left={1}>
                <Icon name="folder" size={8} />
                <Icon name="link" size={7} />
                <IconRow $gap={0} $left={1}><Fill $w={16} $h={10} $color="#fff" /></IconRow>
              </IconRow>
              <Name $left={4}>Device</Name>
            </LayerBody>
          </LayerRow>
          <LayerRow $h={15}>
            <Eye />
            <LayerBody $indent={2}>
              <Thumb $w={15}>
                <svg width="9" height="6" viewBox="0 0 9 6" aria-hidden="true">
                  <path d="M3 2 5 1 9 3V5.4L6 5Z" fill="#111" />
                </svg>
                <ThumbBadge><Icon name="smart" size={6} /></ThumbBadge>
              </Thumb>
              <Name $left={5}>Shadow</Name>
              <Icon name="fx" size={7} />
              <Icon name="down" size={6} color="#aaa" />
            </LayerBody>
          </LayerRow>
          <LayerRow $h={15}>
            <Eye />
            <LayerBody $indent={6}>
              <Fill $w={7} $h={8} $color="#e6eaed" />
              <Name $left={9}>Change Color</Name>
            </LayerBody>
          </LayerRow>
        </LayerList>
        <Scroll />
      </LayersArea>
      <LayersFoot>
        {["linkH", "fx", "mask", "adjust", "folder", "plus", "trash"].map((n) => (
          <IconButton key={n} $dim={n === "linkH"} aria-label={n}><Icon name={n} /></IconButton>
        ))}
      </LayersFoot>
    </>
  );
}

export default function App() {
  return (
    <Page>
      <Global />
      <Window>
        <MenuBar>
          <Logo>
            <svg width="8" height="8" viewBox="0 0 8 8" aria-hidden="true">
              <rect width="8" height="8" rx="1" fill="#001e36" />
              <path d="M2 6V2.3H3.1C4.5 2.3 4.5 4.3 3.1 4.3H2M6.3 3.7C5.2 3.3 4.7 4.2 5.5 4.6 6.6 5 6.1 6.1 4.9 5.6" fill="none" stroke="#31a8ff" strokeWidth=".8" />
            </svg>
          </Logo>
          {topMenus.map((m, i) => <MenuButton key={m} $open={i === 0}>{m}</MenuButton>)}
          <WindowButtons>
            <WindowButton aria-label="最小化"><Icon name="min" size={6} /></WindowButton>
            <WindowButton aria-label="还原"><Icon name="restore" size={6} /></WindowButton>
            <WindowButton $wide aria-label="关闭"><Icon name="close" size={6} /></WindowButton>
          </WindowButtons>
        </MenuBar>
        <OptionsBar>
          <Icon name="home" size={9} color="#ddd" />
          <OptionCheck><Check type="checkbox" />显示变换控件</OptionCheck>
          <ToolGroup $left={16} $gap={5}>
            {["alignL", "alignC", "alignR"].map((n) => <IconButton key={n} aria-label={n}><Icon name={n} /></IconButton>)}
          </ToolGroup>
          <ToolGroup $left={8} $gap={0}><IconButton aria-label="distV"><Icon name="distV" /></IconButton></ToolGroup>
          <Divider />
          <ToolGroup $left={2} $gap={5}>
            {["alignT", "alignM", "alignB"].map((n) => <IconButton key={n} aria-label={n}><Icon name={n} /></IconButton>)}
          </ToolGroup>
          <ToolGroup $left={8} $gap={0}><IconButton aria-label="distH"><Icon name="distH" /></IconButton></ToolGroup>
          <Divider />
          <IconButton aria-label="更多"><Icon name="dots" size={9} color="#ddd" /></IconButton>
          <Divider />
          <Mode>3D 模式:</Mode>
          <ToolGroup $left={7} $gap={4}>
            {["orbit", "roll", "pan", "slide", "camera"].map((n) => <IconButton key={n} $dim aria-label={n}><Icon name={n} size={9} /></IconButton>)}
          </ToolGroup>
          <RightTools>
            <Icon name="zoom" size={8} />
            <ToolGroup $left={4} $gap={2}>
              <Icon name="layout" size={9} />
              <Icon name="down" size={6} />
            </ToolGroup>
            <Icon name="share" size={9} />
          </RightTools>
        </OptionsBar>
        <Work>
          <Toolbar>
            <Strip><Icon name="expand" size={5} /></Strip>
            <ToolList>
              {tools.map((t, i) => <Tool key={t} $on={i === 0} aria-label={t}><Icon name={t} size={9} /></Tool>)}
            </ToolList>
            <ToolFoot>
              <MiniSwatch><Icon name="restore" size={5} /></MiniSwatch>
              <Colors $size={14}>
                <Back />
                <Fore />
              </Colors>
              <Icon name="quickMask" size={9} />
              <Icon name="screen" size={9} />
            </ToolFoot>
          </Toolbar>
          <Doc>
            <Tabs>
              <DocTab><Icon name="close" size={5} /></DocTab>
            </Tabs>
            <CanvasRow>
              <CanvasArea>
                <Stage><Artwork /></Stage>
              </CanvasArea>
            </CanvasRow>
            <Status>
              <span>18.33%</span>
              <span>6480 像素 x 4319 像素 (72 ppi)</span>
              <Icon name="right" size={5} />
            </Status>
          </Doc>
          <Dock>
            <Strip $end><Icon name="collapse" size={5} /></Strip>
            {dock.map((g) => (
              <DockGroup key={g[0]}>
                {g.map((n) => <DockButton key={n} aria-label={n}><Icon name={n} size={9} /></DockButton>)}
              </DockGroup>
            ))}
          </Dock>
          <Panels>
            <Strip $end><Icon name="expand" size={5} /></Strip>
            <ColorPanel />
            <PropertiesPanel />
            <LayersPanel />
          </Panels>
        </Work>

        <Menu role="menu" $x={15} $y={11} $w={117} $h={337}>
          <MenuEntries entries={fileMenu} />
        </Menu>
        <Menu role="menu" $x={129} $y={155} $w={158} $h={178}>
          <MenuEntries entries={exportMenu} />
        </Menu>

        <Lens>
          <LensMenu>
            <LensParent $on><Icon name="tri" size={11} /></LensParent>
            <LensParent><Icon name="tri" size={11} /></LensParent>
          </LensMenu>
          <LensSubmenu>
            <LensItem $on>快速导出为 PNG</LensItem>
            <LensItem>导出为...</LensItem>
            <LensLine />
            <LensItem>导出首选项...</LensItem>
            <LensLine />
            <LensItem>存储为 Web 所用格式</LensItem>
          </LensSubmenu>
        </Lens>
      </Window>
    </Page>
  );
}
